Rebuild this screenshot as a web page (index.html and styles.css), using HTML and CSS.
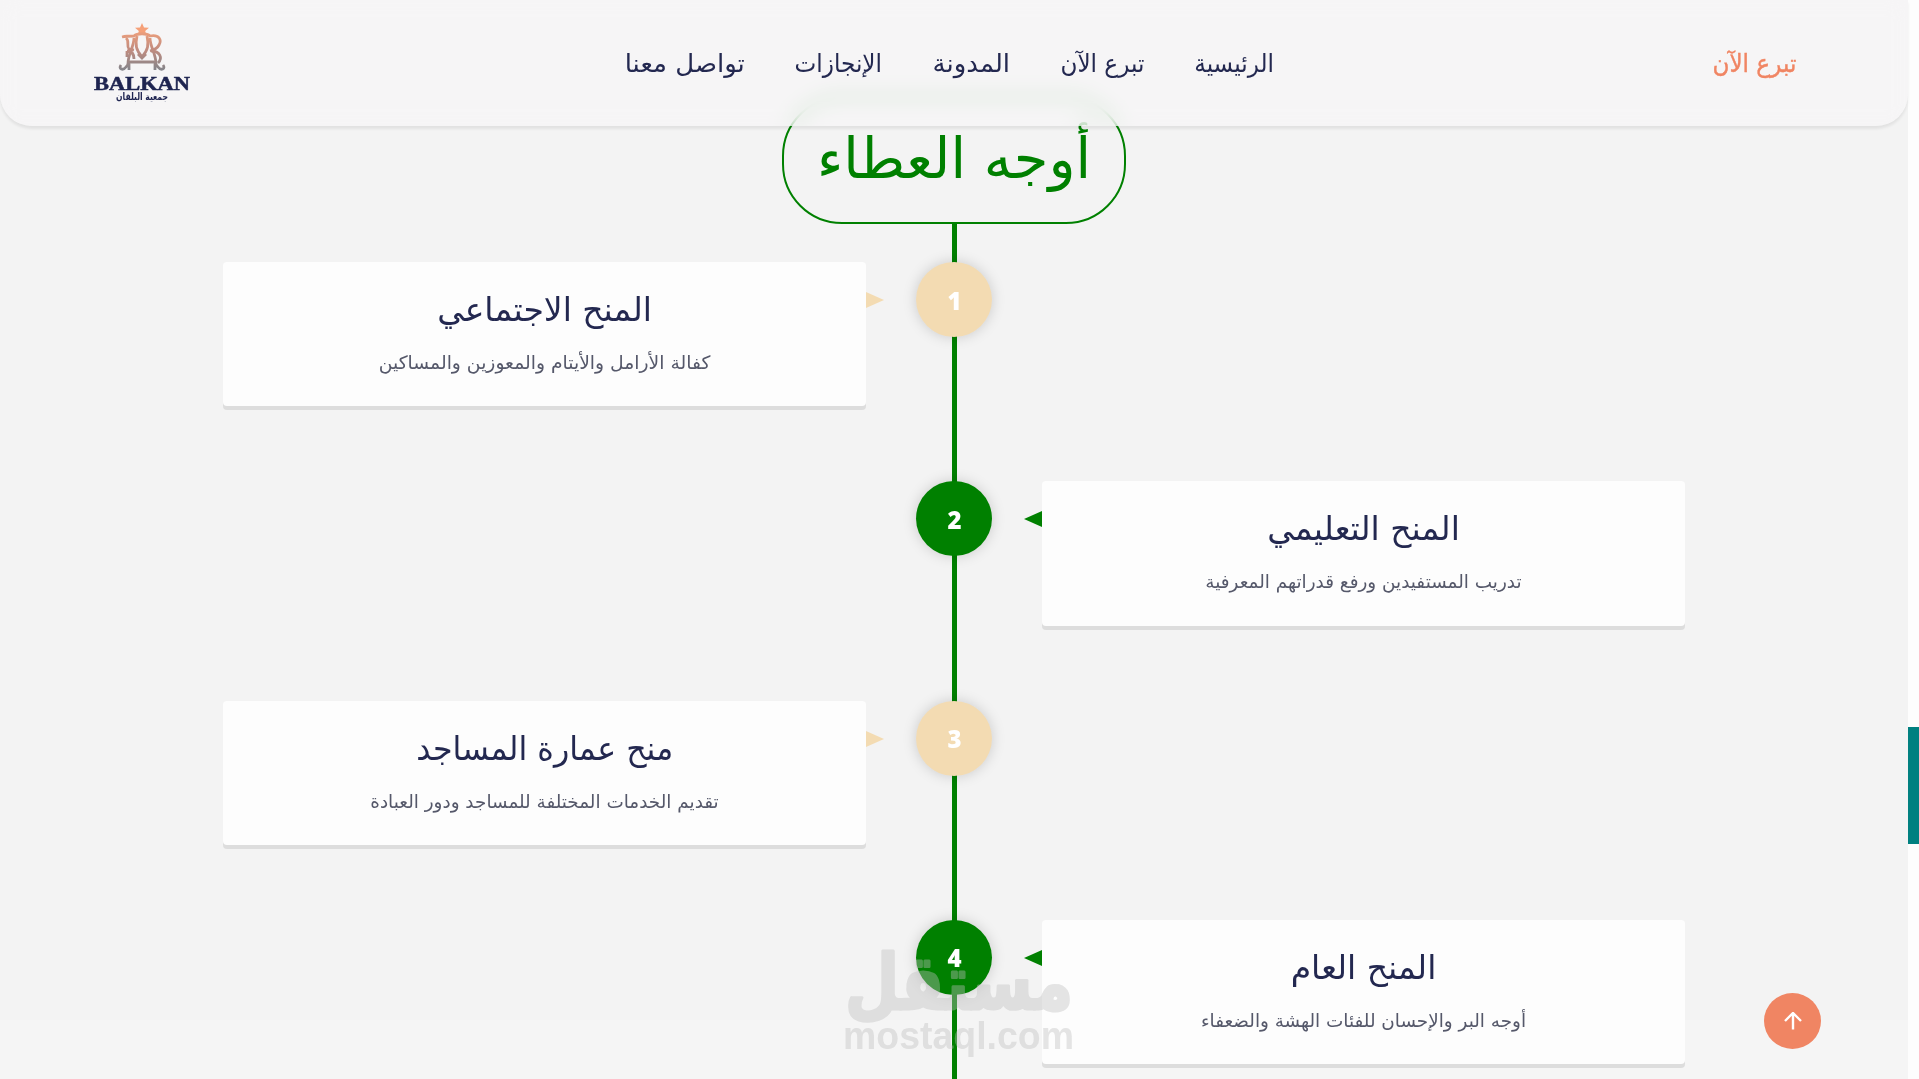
FILE: index.html
```
<!DOCTYPE html>
<html lang="ar" dir="rtl">
<head>
    <meta charset="UTF-8">
    <meta name="viewport" content="width=device-width, initial-scale=1.0">
    <title>جمعية البلقان</title>
    <link rel="stylesheet" href="styles.css">
</head>
<body>

    <!-- Header -->
    <header class="header">
        <a href="#" class="donate-link"><span class="t">تبرع الآن</span></a>
        <nav class="nav">
            <a href="#" class="nav-home"><span class="t">الرئيسية</span></a>
            <a href="#" class="nav-donate"><span class="t">تبرع الآن</span></a>
            <a href="#" class="nav-blog"><span class="t">المدونة</span></a>
            <a href="#" class="nav-work"><span class="t">الإنجازات</span></a>
            <a href="#" class="nav-contact"><span class="t">تواصل معنا</span></a>
        </nav>
        <a href="#" class="logo">
            <svg width="98" height="84" viewBox="93 21 98 84">
                <defs>
                    <linearGradient id="emblem" gradientUnits="userSpaceOnUse" x1="0" y1="30" x2="0" y2="70">
                        <stop offset="0" stop-color="#f0a07c"/>
                        <stop offset="0.5" stop-color="#c08c80"/>
                        <stop offset="1" stop-color="#85858b"/>
                    </linearGradient>
                </defs>
                <path class="star" d="M142 23l2 4.4 5 .4-3.8 3.2 1.2 4.6-4.4-2.4-4.4 2.4 1.2-4.6-3.8-3.2 5-.4z"/>
                <g class="emblem" stroke="url(#emblem)">
                    <path d="M122 37c4-1 8-1 12-1c3-3 13-3 16 0c9-2 12 4 9 9c-2 4-5 5-9 6"/>
                    <path d="M126 38c4 3 0 8 3 11l5 1"/>
                    <path d="M137 36c-2 9-1 14 5 21c6-7 7-12 5-21"/>
                    <path d="M134 38c0 9-6 15-6 26"/>
                    <path d="M150 38c0 9 6 15 6 26"/>
                    <path d="M151 51c9 0 12 7 7 12"/>
                    <path d="M127 51c5 0 7 3 7 8M127 51v6"/>
                    <path d="M121 65c-3 4 2 6 5 2l4-5h24l4 5c3 4 8 2 5-2M129 64v6M155 64v6"/>
                    <path d="M138 54l4 4l4-4"/>
                </g>
                <text class="logo-name" x="94" y="89.6" textLength="96" lengthAdjust="spacingAndGlyphs">BALKAN</text>
                <text class="logo-sub" x="168" y="100" textLength="52" lengthAdjust="spacingAndGlyphs">جمعية البلقان</text>
            </svg>
        </a>
    </header>

    <!-- Timeline -->
    <main class="timeline-section">
        <h1 class="title"><span class="t">أوجه العطاء</span></h1>
        <div class="timeline">
            <div class="item item-left sand">
                <div class="card">
                    <h3><span class="t">المنح الاجتماعي</span></h3>
                    <p class="wide"><span class="t">كفالة الأرامل والأيتام والمعوزين والمساكين</span></p>
                </div>
                <div class="circle">1</div>
            </div>
            <div class="item item-right green">
                <div class="card">
                    <h3><span class="t">المنح التعليمي</span></h3>
                    <p><span class="t">تدريب المستفيدين ورفع قدراتهم المعرفية</span></p>
                </div>
                <div class="circle">2</div>
            </div>
            <div class="item item-left sand">
                <div class="card">
                    <h3 class="narrow"><span class="t">منح عمارة المساجد</span></h3>
                    <p><span class="t">تقديم الخدمات المختلفة للمساجد ودور العبادة</span></p>
                </div>
                <div class="circle">3</div>
            </div>
            <div class="item item-right green">
                <div class="card">
                    <h3><span class="t">المنح العام</span></h3>
                    <p><span class="t">أوجه البر والإحسان للفئات الهشة والضعفاء</span></p>
                </div>
                <div class="circle">4</div>
            </div>
        </div>
    </main>

    <!-- Page scrollbar -->
    <div class="scrollbar"><div class="thumb"></div></div>

    <a href="#" class="to-top">
        <svg width="18" height="18" viewBox="0 0 18 18"><path d="M9 17.5V1.5M1 9L9 1L17 9"/></svg>
    </a>

    <div class="bottom-shade"></div>

    <div class="watermark">
        <svg width="240" height="116" viewBox="-4 0 240 116">
            <text class="wm-ar" x="230" y="59" textLength="228" lengthAdjust="spacingAndGlyphs">مستقل</text>
            <text class="wm-en" x="0" y="99" textLength="231" lengthAdjust="spacingAndGlyphs">mostaql.com</text>
        </svg>
    </div>

</body>
</html>
```
FILE: styles.css
```
* {
  margin: 0;
  padding: 0;
  box-sizing: border-box;
}

body {
  background-color: #f3f3f3;
  font-family: "DejaVu Sans", sans-serif;
  height: 100vh;
  overflow: hidden;
}

a {
  text-decoration: none;
  color: inherit;
}

.t {
  display: inline-block;
  white-space: nowrap;
}

/* Header */
.header {
  position: fixed;
  top: 0;
  left: 0;
  width: 1908px;
  height: 126px;
  padding: 0 112px 0 93px;
  display: flex;
  justify-content: space-between;
  align-items: center;
  background: rgba(248, 247, 248, 0.6);
  backdrop-filter: blur(10px);
  border-radius: 0 0 32px 32px;
  box-shadow: 0 3px 3px rgba(0, 0, 0, 0.07);
  z-index: 10;
}

.nav {
  display: flex;
  gap: 50px;
  padding-right: 4px;
  font-size: 25px;
  color: #232850;
}

.nav a,
.donate-link {
  display: flex;
  justify-content: center;
}

.nav-home { width: 81px; }
.nav-donate { width: 83px; }
.nav-blog { width: 79px; }
.nav-work { width: 87px; }
.nav-contact { width: 120px; }

.nav-home .t,
.nav-donate .t,
.nav-work .t,
.donate-link .t {
  transform: scaleX(0.925);
}

.nav-blog .t,
.nav-contact .t {
  transform: scaleX(1.04);
}

.donate-link {
  width: 83px;
  font-size: 25px;
  color: #f08563;
  -webkit-text-stroke: 0.4px #f08563;
}

.logo {
  display: flex;
}

.star {
  fill: #f5a078;
}

.emblem path {
  fill: none;
  stroke-width: 2.8;
}

.logo-name {
  font: bold 19.5px "Liberation Serif", serif;
  fill: #1e2450;
  stroke: #1e2450;
  stroke-width: 0.5;
  direction: ltr;
}

.logo-sub {
  font: bold 10px "DejaVu Sans", sans-serif;
  fill: #1e2450;
}

/* Timeline */
.timeline-section {
  width: 1908px;
  margin-right: 11px;
  padding-top: 96px;
  display: flex;
  flex-direction: column;
  align-items: center;
}

.title {
  width: 344px;
  height: 128px;
  padding-bottom: 4px;
  display: flex;
  justify-content: center;
  align-items: center;
  border: 2px solid #008000;
  border-radius: 60px;
  color: #008000;
  font-size: 56px;
  font-weight: normal;
}

.timeline {
  direction: ltr;
  width: 1462px;
  height: 870px;
  padding-top: 38px;
  display: flex;
  flex-direction: column;
  gap: 74.3px;
  background: linear-gradient(#008000, #008000) center top / 5px 100% no-repeat;
}

.item {
  display: flex;
  height: 145px;
  flex-shrink: 0;
}

.item-left {
  padding-right: 693px;
  justify-content: space-between;
}

.item-right {
  padding-left: 693px;
  flex-direction: row-reverse;
  justify-content: space-between;
}

.card {
  position: relative;
  width: 643px;
  height: 144.4px;
  padding-top: 23px;
  background: #fdfdfd;
  border-radius: 4px;
  box-shadow: 0 4px 0 #ddd;
  text-align: center;
  direction: rtl;
}

.card::before {
  content: "";
  position: absolute;
  top: 30px;
  border: 8px solid transparent;
}

.item-left .card::before {
  left: 100%;
  border-left: 18px solid #f3dbb2;
  border-right: 0;
}

.item-right .card::before {
  right: 100%;
  border-right: 18px solid #008000;
  border-left: 0;
}

.card h3 {
  font-size: 33px;
  font-weight: normal;
  line-height: 50px;
  color: #232850;
}

.card .narrow .t {
  transform: scaleX(0.96);
}

.card p {
  margin-top: 13px;
  font-size: 18.4px;
  line-height: 30px;
  color: #55586a;
}

.card .wide .t {
  transform: scaleX(1.02);
}

.circle {
  width: 76px;
  height: 75px;
  padding: 1px 0 0 1px;
  border-radius: 50%;
  display: flex;
  justify-content: center;
  align-items: center;
  color: #fff;
  font: 800 24px "Open Sans", sans-serif;
  box-shadow: 0 0 14px rgba(0, 0, 0, 0.17);
}

.sand .circle {
  background: #f3dbb2;
}

.green .circle {
  background: #008000;
}

/* Scrollbar */
.scrollbar {
  position: fixed;
  top: 0;
  right: 0;
  width: 11px;
  height: 100%;
  padding-top: 727px;
  background: #fdfdfd;
}

.thumb {
  height: 117px;
  background: #008080;
}

/* Back to top button */
.to-top {
  position: fixed;
  left: 1764px;
  top: 993px;
  width: 57px;
  height: 56px;
  border-radius: 50%;
  display: flex;
  justify-content: center;
  align-items: center;
  background: #f08563;
}

.to-top path {
  fill: none;
  stroke: #fff;
  stroke-width: 2.4;
}

.bottom-shade {
  position: fixed;
  left: 0;
  right: 0;
  bottom: 0;
  height: 59px;
  background: rgba(255, 255, 255, 0.18);
  z-index: -1;
}

/* Watermark */
.watermark {
  position: fixed;
  left: 839px;
  top: 950px;
  opacity: 0.4;
  pointer-events: none;
}

.watermark svg {
  display: block;
  overflow: visible;
}

.wm-ar {
  font: bold 76px "DejaVu Sans", sans-serif;
  fill: #bebebe;
  stroke: #bebebe;
  stroke-width: 3;
  stroke-linejoin: round;
}

.wm-en {
  font: bold 38px "Liberation Sans", sans-serif;
  fill: #bebebe;
  direction: ltr;
}
```
